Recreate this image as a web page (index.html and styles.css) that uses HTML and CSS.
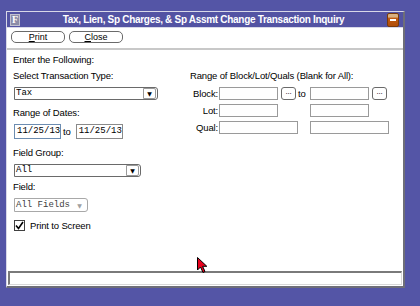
FILE: index.html
```html
<!DOCTYPE html>
<html lang="en">
<head>
    <meta charset="UTF-8">
    <title>Transaction Inquiry</title>
    <link rel="stylesheet" href="styles.css">
</head>
<body>
    <div class="window">
        <div class="titlebar">
            <span class="app-icon">F</span>
            <span class="title">Tax, Lien, Sp Charges, &amp; Sp Assmt Change Transaction Inquiry</span>
            <span class="min-btn"><span class="dash"></span></span>
        </div>
        <div class="toolbar">
            <button class="tool-btn"><u>P</u>rint</button>
            <button class="tool-btn"><u>C</u>lose</button>
        </div>

        <div class="content">
            <p class="intro">Enter the Following:</p>
            <div class="columns">
                <div class="left-col">
                    <p class="lbl">Select Transaction Type:</p>
                    <div class="combo combo-type"><span class="val">Tax</span><span class="arrow">&#9660;</span></div>

                    <p class="lbl lbl-dates">Range of Dates:</p>
                    <div class="dates">
                        <span class="date focus">11/25/13</span>
                        <span class="to">to</span>
                        <span class="date">11/25/13</span>
                    </div>

                    <p class="lbl lbl-group">Field Group:</p>
                    <div class="combo combo-group"><span class="val">All</span><span class="arrow">&#9660;</span></div>

                    <p class="lbl lbl-field">Field:</p>
                    <div class="combo combo-field disabled"><span class="val">All Fields</span><span class="arrow">&#9660;</span></div>

                    <label class="check-row">
                        <span class="check">
                            <svg width="9" height="9" viewBox="0 0 9 9"><path d="M1 4.5 L3.5 7.5 L8 1" fill="none" stroke="#000" stroke-width="1.6"/></svg>
                        </span>
                        Print to Screen
                    </label>
                </div>

                <div class="right-col">
                    <p class="lbl">Range of Block/Lot/Quals (Blank for All):</p>
                    <div class="range-grid">
                        <span class="rlbl">Block:</span>
                        <span class="box"></span>
                        <span class="dots">...</span>
                        <span class="rto">to</span>
                        <span class="box"></span>
                        <span class="dots">...</span>

                        <span class="rlbl">Lot:</span>
                        <span class="box"></span>
                        <span></span>
                        <span></span>
                        <span class="box"></span>
                        <span></span>

                        <span class="rlbl">Qual:</span>
                        <span class="box wide"></span>
                        <span></span>
                        <span class="box wide"></span>
                    </div>
                </div>
            </div>
        </div>

        <div class="statusbar"></div>
    </div>

    <svg class="cursor" width="12" height="17" viewBox="0 0 12 17">
        <path d="M0.5 0.5 L0.5 13 L3.5 10 L6 15.5 L8 14.5 L5.6 9.3 L9.8 9.3 Z" fill="#e8001c" stroke="#000" stroke-width="1"/>
    </svg>
</body>
</html>
```

FILE: styles.css
```css
body {
    margin: 0;
    width: 420px;
    height: 306px;
    background-color: #5455a6;
    font-family: "Liberation Sans", Arial, sans-serif;
    font-size: 9.5px;
    letter-spacing: -0.15px;
    color: #000;
    position: relative;
    overflow: hidden;
}
p {
    margin: 0;
}
.window {
    margin: 11px 0 0 6px;
    width: 396px;
    height: 274px;
    background: #fff;
    border-top: 1px solid #d8d8e8;
    border-left: 1px solid #d8d8e8;
    border-right: 2px solid #6e6e78;
    border-bottom: 2px solid #6e6e78;
    display: flex;
    flex-direction: column;
}
.titlebar {
    height: 15px;
    background: #5353a3;
    display: flex;
    align-items: center;
    padding: 0 4px 0 3px;
    color: #fff;
    border-bottom: 1px solid #d8d8e8;
}
.app-icon {
    width: 8px;
    height: 10px;
    background: #8c8ca8;
    border: 1px solid #c0c0d0;
    color: #fff;
    font-family: "Liberation Serif", serif;
    font-weight: bold;
    font-size: 10px;
    line-height: 10px;
    text-align: center;
}
.title {
    flex: 1;
    text-align: center;
    font-weight: bold;
    font-size: 10px;
    letter-spacing: -0.3px;
}
.min-btn {
    width: 10px;
    height: 12px;
    border-radius: 2px;
    background: linear-gradient(#d8b080 0, #d8b080 25%, #c05a10 35%, #b04c08 100%);
    border: 1px solid #7a3a08;
    display: flex;
    align-items: center;
    justify-content: center;
}
.dash {
    width: 6px;
    height: 2px;
    background: #fff;
}
.toolbar {
    height: 17px;
    display: flex;
    gap: 4px;
    padding: 3px 0 0 4px;
    border-bottom: 2px solid #c8c8c8;
}
.tool-btn {
    width: 54px;
    height: 12px;
    padding: 0;
    background: #fff;
    border: 1px solid #6a6a6a;
    border-radius: 5px;
    font-family: "Liberation Sans", Arial, sans-serif;
    font-size: 9px;
    line-height: 10px;
    color: #000;
}
.content {
    flex: 1;
    padding: 4px 0 0 6px;
}
.intro {
    line-height: 12px;
}
.columns {
    display: flex;
    margin-top: 4px;
}
.left-col {
    width: 170px;
}
.lbl {
    line-height: 12px;
}
.combo {
    margin-top: 5px;
    height: 11px;
    border: 1px solid #6a6a6a;
    border-radius: 0 3px 3px 0;
    display: flex;
    align-items: center;
    font-family: "Liberation Mono", "Courier New", monospace;
    font-size: 9px;
    letter-spacing: 0;
    margin-left: 1px;
}
.combo .val {
    flex: 1;
    padding-left: 1px;
    line-height: 11px;
}
.combo .arrow {
    width: 11px;
    height: 9px;
    margin-right: 1px;
    border: 1px solid #9a9a9a;
    border-radius: 0 2px 2px 0;
    font-family: "DejaVu Sans", sans-serif;
    font-size: 6px;
    line-height: 9px;
    text-align: center;
}
.combo-type {
    width: 142px;
}
.combo-group {
    width: 125px;
}
.combo-field {
    width: 72px;
    margin-top: 5px;
    height: 12px;
    border-color: #a8a8a8;
}
.combo.disabled .val {
    color: #404040;
}
.combo.disabled .arrow {
    border-color: #fff;
    color: #a0a0a0;
}
.lbl-dates {
    margin-top: 7px;
}
.dates {
    margin-top: 5px;
    display: flex;
    align-items: center;
    margin-left: 1px;
}
.date {
    width: 43px;
    height: 13px;
    padding-left: 2px;
    border: 1px solid #8a8a8a;
    font-family: "Liberation Mono", "Courier New", monospace;
    font-size: 9px;
    letter-spacing: 0;
    line-height: 13px;
}
.date.focus {
    border-color: #6c8cb0;
}
.to {
    margin: 0 5px 0 2px;
}
.lbl-group {
    margin-top: 8px;
}
.lbl-field {
    margin-top: 4px;
}
.check-row {
    margin-top: 8px;
    margin-left: 1px;
    display: flex;
    align-items: center;
    gap: 5px;
}
.check {
    width: 9px;
    height: 9px;
    border: 1px solid #404040;
    display: flex;
    align-items: center;
    justify-content: center;
}
.right-col {
    padding-left: 7px;
}
.range-grid {
    margin-top: 5px;
    display: grid;
    grid-template-columns: 29px 62px 16px 13px 62px 16px;
    grid-template-rows: 12px 12px 12px;
    row-gap: 5px;
    align-items: center;
}
.rlbl {
    text-align: right;
    padding-right: 1px;
}
.box {
    width: 57px;
    height: 11px;
    border: 1px solid #9a9a9a;
}
.box.wide {
    width: 77px;
    grid-column: span 2;
}
.dots {
    width: 13px;
    height: 11px;
    border: 1px solid #6a6a6a;
    border-radius: 3px;
    font-size: 8px;
    line-height: 8px;
    text-align: center;
}
.rto {
    padding-left: 1px;
}
.statusbar {
    margin: 0 1px 1px 1px;
    height: 11px;
    border-top: 2px solid #7a7a7a;
    border-left: 2px solid #7a7a7a;
    border-bottom: 1px solid #d8d8d8;
    border-right: 1px solid #d8d8d8;
}
.cursor {
    position: absolute;
    left: 197px;
    top: 257px;
}
```
